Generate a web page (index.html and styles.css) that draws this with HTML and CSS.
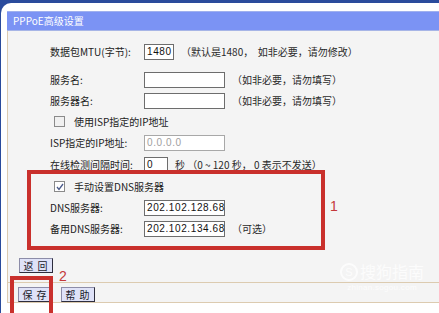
FILE: index.html
```html
<!DOCTYPE html>
<html lang="zh-CN">
<head>
    <meta charset="UTF-8">
    <title>PPPoE高级设置</title>
    <link rel="stylesheet" href="styles.css">
</head>
<body>
    <div class="page">
        <div class="sheet">
            <div class="title-bar">PPPoE高级设置</div>
            <div class="content">
                <div class="form">
                    <div class="row row-first">
                        <span class="label">数据包MTU(字节):</span>
                        <span class="input input-short">1480</span>
                        <span class="hint">（默认是1480，&nbsp; 如非必要，请勿修改）</span>
                    </div>
                    <div class="row">
                        <span class="label">服务名:</span>
                        <span class="input"></span>
                        <span class="hint">（如非必要，请勿填写）</span>
                    </div>
                    <div class="row">
                        <span class="label">服务器名:</span>
                        <span class="input"></span>
                        <span class="hint">（如非必要，请勿填写）</span>
                    </div>
                    <div class="row">
                        <span class="check"></span>
                        <span class="check-label">使用ISP指定的IP地址</span>
                    </div>
                    <div class="row">
                        <span class="label">ISP指定的IP地址:</span>
                        <span class="input input-off">0.0.0.0</span>
                    </div>
                    <div class="row row-tall">
                        <span class="label">在线检测间隔时间:</span>
                        <span class="input input-tiny">0</span>
                        <span class="hint">秒 （0 ~ 120 秒， 0 表示不发送）</span>
                    </div>
                    <div class="row">
                        <span class="check checked">
                            <svg width="8" height="8" viewBox="0 0 8 8"><path d="M1 4 L3 6.5 L7 1" fill="none" stroke="#4a5a8a" stroke-width="1.3"/></svg>
                        </span>
                        <span class="check-label">手动设置DNS服务器</span>
                    </div>
                    <div class="row">
                        <span class="label">DNS服务器:</span>
                        <span class="input">202.102.128.68</span>
                    </div>
                    <div class="row">
                        <span class="label">备用DNS服务器:</span>
                        <span class="input">202.102.134.68</span>
                        <span class="hint">（可选）</span>
                    </div>
                </div>
                <div class="back-row">
                    <span class="btn">返 回</span>
                </div>
                <div class="footer">
                    <span class="btn">保 存</span>
                    <span class="btn">帮 助</span>
                </div>
            </div>
        </div>
        <div class="mark mark-dns"></div>
        <div class="mark mark-save"></div>
        <div class="mark-num num-1">1</div>
        <div class="mark-num num-2">2</div>
        <div class="watermark">
            <div class="wm-logo"><span class="wm-s">S</span>搜狗指南</div>
            <div class="wm-url">zhinan.sogou.com</div>
        </div>
    </div>
</body>
</html>
```

FILE: styles.css
```css
body {
    margin: 0;
    background-color: #ffffff;
    font-family: "Noto Sans CJK SC", "Liberation Sans", sans-serif;
    font-size: 10px;
    color: #222222;
}
.page {
    position: relative;
    width: 439px;
    height: 313px;
    overflow: hidden;
    background-color: #2a4b9c;
}
.sheet {
    margin-top: 3px;
    margin-left: 1px;
    height: 310px;
    padding: 8px 0 0 6px;
    background-color: #ffffff;
    border-top-left-radius: 10px;
    box-sizing: border-box;
}
.title-bar {
    height: 18px;
    line-height: 18px;
    padding-left: 6px;
    background-color: #7b93f4;
    border-top: 1px solid #9fb0ee;
    border-bottom: 1px solid #a7b5e6;
    color: #ffffff;
    font-size: 10px;
}
.content {
    height: 272px;
    background-color: #f4f4f4;
    border-left: 1px solid #dccbb0;
    display: flex;
    flex-direction: column;
}
.form {
    padding: 10px 0 0 42px;
}
.row {
    display: flex;
    align-items: center;
    height: 21px;
}
.row-first {
    margin-bottom: 7px;
}
.row-tall {
    height: 23px;
}
.label {
    width: 94px;
    flex-shrink: 0;
}
.input {
    width: 77px;
    height: 14px;
    line-height: 14px;
    border: 1px solid #6d6d6d;
    background-color: #ffffff;
    padding-left: 2px;
    font-family: "Liberation Sans", sans-serif;
    font-size: 10px;
    letter-spacing: 0.6px;
    color: #111111;
}
.input-short {
    width: 26px;
}
.input-tiny {
    width: 20px;
}
.input-off {
    border-color: #a8a8a8;
    color: #a0a0a0;
}
.hint {
    margin-left: 7px;
    color: #2a2a2a;
    white-space: nowrap;
}
.check {
    width: 9px;
    height: 9px;
    margin: 0 9px 0 4px;
    border: 1px solid #8a8a8a;
    background-color: #f0f0f0;
    display: flex;
    align-items: center;
    justify-content: center;
}
.check.checked {
    background-color: #ffffff;
}
.check-label {
    color: #222222;
}
.back-row {
    padding: 19px 0 0 11px;
    height: 23px;
}
.btn {
    display: inline-block;
    width: 32px;
    height: 13px;
    line-height: 13px;
    text-align: center;
    letter-spacing: 1px;
    background-color: #dfe2f8;
    border: 1px solid #2d2d3d;
    border-left-color: #8c8ca8;
    border-top-color: #8c8ca8;
    color: #1a1a2a;
}
.footer {
    margin-top: 9px;
    height: 21px;
    padding: 4px 0 0 10px;
    box-sizing: border-box;
    border-top: 1px solid #dccbb0;
    border-bottom: 1px solid #dccbb0;
    display: flex;
    gap: 9px;
}
.mark {
    position: absolute;
    border: 4px solid #c9302c;
}
.mark-dns {
    left: 27px;
    top: 170px;
    width: 290px;
    height: 72px;
}
.mark-save {
    left: 10px;
    top: 276px;
    width: 35px;
    height: 40px;
}
.mark-num {
    position: absolute;
    color: #c4383a;
    font-family: "Liberation Sans", sans-serif;
    font-size: 14px;
}
.num-1 {
    left: 330px;
    top: 198px;
}
.num-2 {
    left: 59px;
    top: 268px;
}
.watermark {
    position: absolute;
    left: 340px;
    top: 262px;
    color: rgba(255, 255, 255, 0.75);
    text-align: center;
}
.wm-logo {
    font-size: 16px;
    line-height: 19px;
    display: flex;
    align-items: center;
}
.wm-s {
    width: 14px;
    height: 14px;
    line-height: 14px;
    border: 2px solid rgba(255, 255, 255, 0.75);
    border-radius: 50%;
    font-size: 11px;
    font-family: "Liberation Sans", sans-serif;
    margin-right: 2px;
}
.wm-url {
    margin-top: 2px;
    font-family: "Liberation Sans", sans-serif;
    font-size: 8px;
    line-height: 9px;
    letter-spacing: 0.3px;
}
```
